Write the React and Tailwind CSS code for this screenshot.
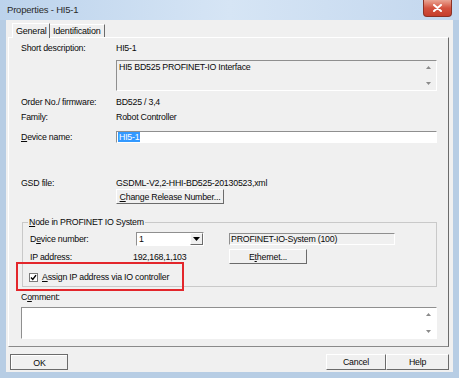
const sunken = "border-t border-l border-t-[#8f8f8f] border-l-[#8f8f8f] border-r border-b border-r-[#ffffff] border-b-[#ffffff]";
const raised = "border-t border-l border-t-[#ffffff] border-l-[#ffffff] border-r border-b border-r-[#6b6b6b] border-b-[#6b6b6b] bg-[#f0f0f0]";

function Arrows() {
  return (
    <div className="absolute right-[4px] top-0 bottom-0 w-[8px] flex flex-col justify-between py-[5px] items-center">
      <svg width="5" height="3" viewBox="0 0 5 3"><path d="M0 3 L2.5 0 L5 3 Z" fill="#8a8a8a" /></svg>
      <svg width="5" height="3" viewBox="0 0 5 3"><path d="M0 0 L2.5 3 L5 0 Z" fill="#8a8a8a" /></svg>
    </div>
  );
}

function Row({ label, children, className = "" }) {
  return (
    <div className={"flex items-center h-[12px] pl-[12px] " + className}>
      <span className="w-[95px] shrink-0">{label}</span>
      {children}
    </div>
  );
}

export default function App() {
  return (
    <div className="w-[459px] h-[378px] bg-[#b7cde4] flex flex-col relative overflow-hidden font-['Liberation_Sans',Arial,sans-serif] text-[8.8px] tracking-[-0.22px] leading-[12px] text-[#0a0a0a] whitespace-nowrap">
      {/* title bar */}
      <div className="h-[20px] shrink-0 flex items-start relative bg-gradient-to-r from-[#bcd3ec] via-[#d6e5f5] to-[#c3d7ee]">
        <span className="ml-[7px] mt-[4px] text-[9.5px] tracking-[-0.2px] text-[#2a2a2a]">Properties - HI5-1</span>
        <div className="absolute right-[7px] top-0 w-[29px] h-[17px] rounded-b-[4px] bg-gradient-to-b from-[#e9a494] via-[#d3523f] to-[#c63e2c] border border-t-0 border-[#8b3125] flex items-center justify-center">
          <svg width="9" height="8" viewBox="0 0 9 8">
            <path d="M1 1 L8 7 M8 1 L1 7" stroke="#ffffff" strokeWidth="2" strokeLinecap="round" />
          </svg>
        </div>
      </div>

      {/* client area */}
      <div className="mx-[6px] h-[352px] bg-[#f0f0f0] flex flex-col">
        {/* tabs */}
        <div className="h-[17px] flex items-end pl-[6px] shrink-0">
          <div className="h-[15px] w-[38px] border-t border-l border-t-[#ffffff] border-l-[#ffffff] border-r border-r-[#6b6b6b] flex items-center pl-[3px] relative top-[1px] bg-[#f0f0f0] z-10 text-[9px]">General</div>
          <div className="h-[13px] w-[55px] border-t border-t-[#ffffff] border-r border-r-[#6b6b6b] flex items-center pl-[3px] text-[9px]">Identification</div>
        </div>

        {/* panel */}
        <div className="ml-[2px] w-[441px] h-[310px] border-t border-l border-t-[#ffffff] border-l-[#ffffff] border-r border-b border-r-[#6b6b6b] border-b-[#8a8a8a] flex flex-col">
          <Row label="Short description:" className="mt-[4px]">
            <span>HI5-1</span>
          </Row>
          <div className={"relative ml-[107px] mt-[6px] w-[321px] h-[31px] " + sunken}>
            <span className="absolute left-[2px] top-0">HI5 BD525 PROFINET-IO Interface</span>
            <Arrows />
          </div>
          <Row label="Order No./ firmware:" className="mt-[5px]">
            <span>BD525 / 3,4</span>
          </Row>
          <Row label="Family:" className="mt-[3px]">
            <span>Robot Controller</span>
          </Row>
          <Row label={<><span className="underline">D</span>evice name:</>} className="mt-[8px]">
            <div className={"w-[321px] h-[12px] bg-white flex items-center " + sunken}>
              <span className="bg-[#3399ff] text-white h-[10px] leading-[10px] px-[1px] ml-[1px]">HI5-1</span>
            </div>
          </Row>
          <Row label="GSD file:" className="mt-[34px]">
            <span>GSDML-V2,2-HHI-BD525-20130523,xml</span>
          </Row>
          <div className={"ml-[107px] w-[108px] h-[15px] flex items-center justify-center " + raised}>
            <span><span className="underline">C</span>hange Release Number...</span>
          </div>

          {/* group box */}
          <fieldset className="ml-[13px] mt-[12px] w-[415px] h-[71px] border border-[#c9c9c9] pl-[6px] pb-[4px]">
            <legend className="-ml-px px-[1px] h-[12px] leading-[12px]"><span className="underline">N</span>ode in PROFINET IO System</legend>
            <div className="flex items-center h-[14px] mt-[4px]">
              <span className="w-[107px] shrink-0 pl-[1px]">D<span className="underline">e</span>vice number:</span>
              <div className={"w-[68px] h-[14px] bg-white flex items-center relative " + sunken}>
                <span className="ml-[2px]">1</span>
                <div className={"absolute right-0 top-0 w-[13px] h-[12px] flex items-center justify-center " + raised}>
                  <svg width="7" height="4" viewBox="0 0 7 4"><path d="M0 0 L7 0 L3.5 4 Z" fill="#000" /></svg>
                </div>
              </div>
              <div className={"ml-[25px] w-[166px] h-[12px] flex items-center " + sunken}>
                <span className="ml-[1px]">PROFINET-IO-System (100)</span>
              </div>
            </div>
            <div className="flex items-center h-[15px] mt-[3px]">
              <span className="w-[104px] shrink-0 pl-[1px]">IP address:</span>
              <span className="w-[96px] shrink-0">192,168,1,103</span>
              <div className={"w-[78px] h-[15px] flex items-center justify-center " + raised}>
                <span>E<span className="underline">t</span>hernet...</span>
              </div>
            </div>
            <div className="flex items-center h-[12px] mt-[7px]">
              <div className="w-[9px] h-[9px] bg-white border border-[#7a7a7a] flex items-center justify-center">
                <svg width="7" height="7" viewBox="0 0 7 7"><path d="M1 3.5 L2.8 5.5 L6 1.2" stroke="#000" strokeWidth="1.4" fill="none" /></svg>
              </div>
              <span className="ml-[4px]"><span className="underline">A</span>ssign IP address via IO controller</span>
            </div>
          </fieldset>

          <div className="pl-[12px] mt-[4px] h-[12px]">C<span className="underline">o</span>mment:</div>
          <div className={"relative ml-[12px] mt-[4px] w-[416px] h-[32px] bg-white " + sunken}>
            <Arrows />
          </div>
        </div>

        {/* bottom buttons */}
        <div className="flex items-center mt-[7px] pl-[4px] pr-[4px]">
          <div className="w-[58px] h-[16px] border border-[#6b6b6b] flex items-center justify-center bg-[#f0f0f0]">
            <div className="w-full h-full border-t border-l border-t-[#ffffff] border-l-[#ffffff] flex items-center justify-center">OK</div>
          </div>
          <div className="flex-1" />
          <div className={"w-[60px] h-[16px] flex items-center justify-center " + raised}>Cancel</div>
          <div className={"w-[63px] h-[16px] flex items-center justify-center " + raised}>Help</div>
        </div>
      </div>

      {/* red highlight */}
      <div className="absolute left-[16px] top-[262px] w-[168px] h-[29px] border-2 border-[#e3262b]" />
    </div>
  );
}
